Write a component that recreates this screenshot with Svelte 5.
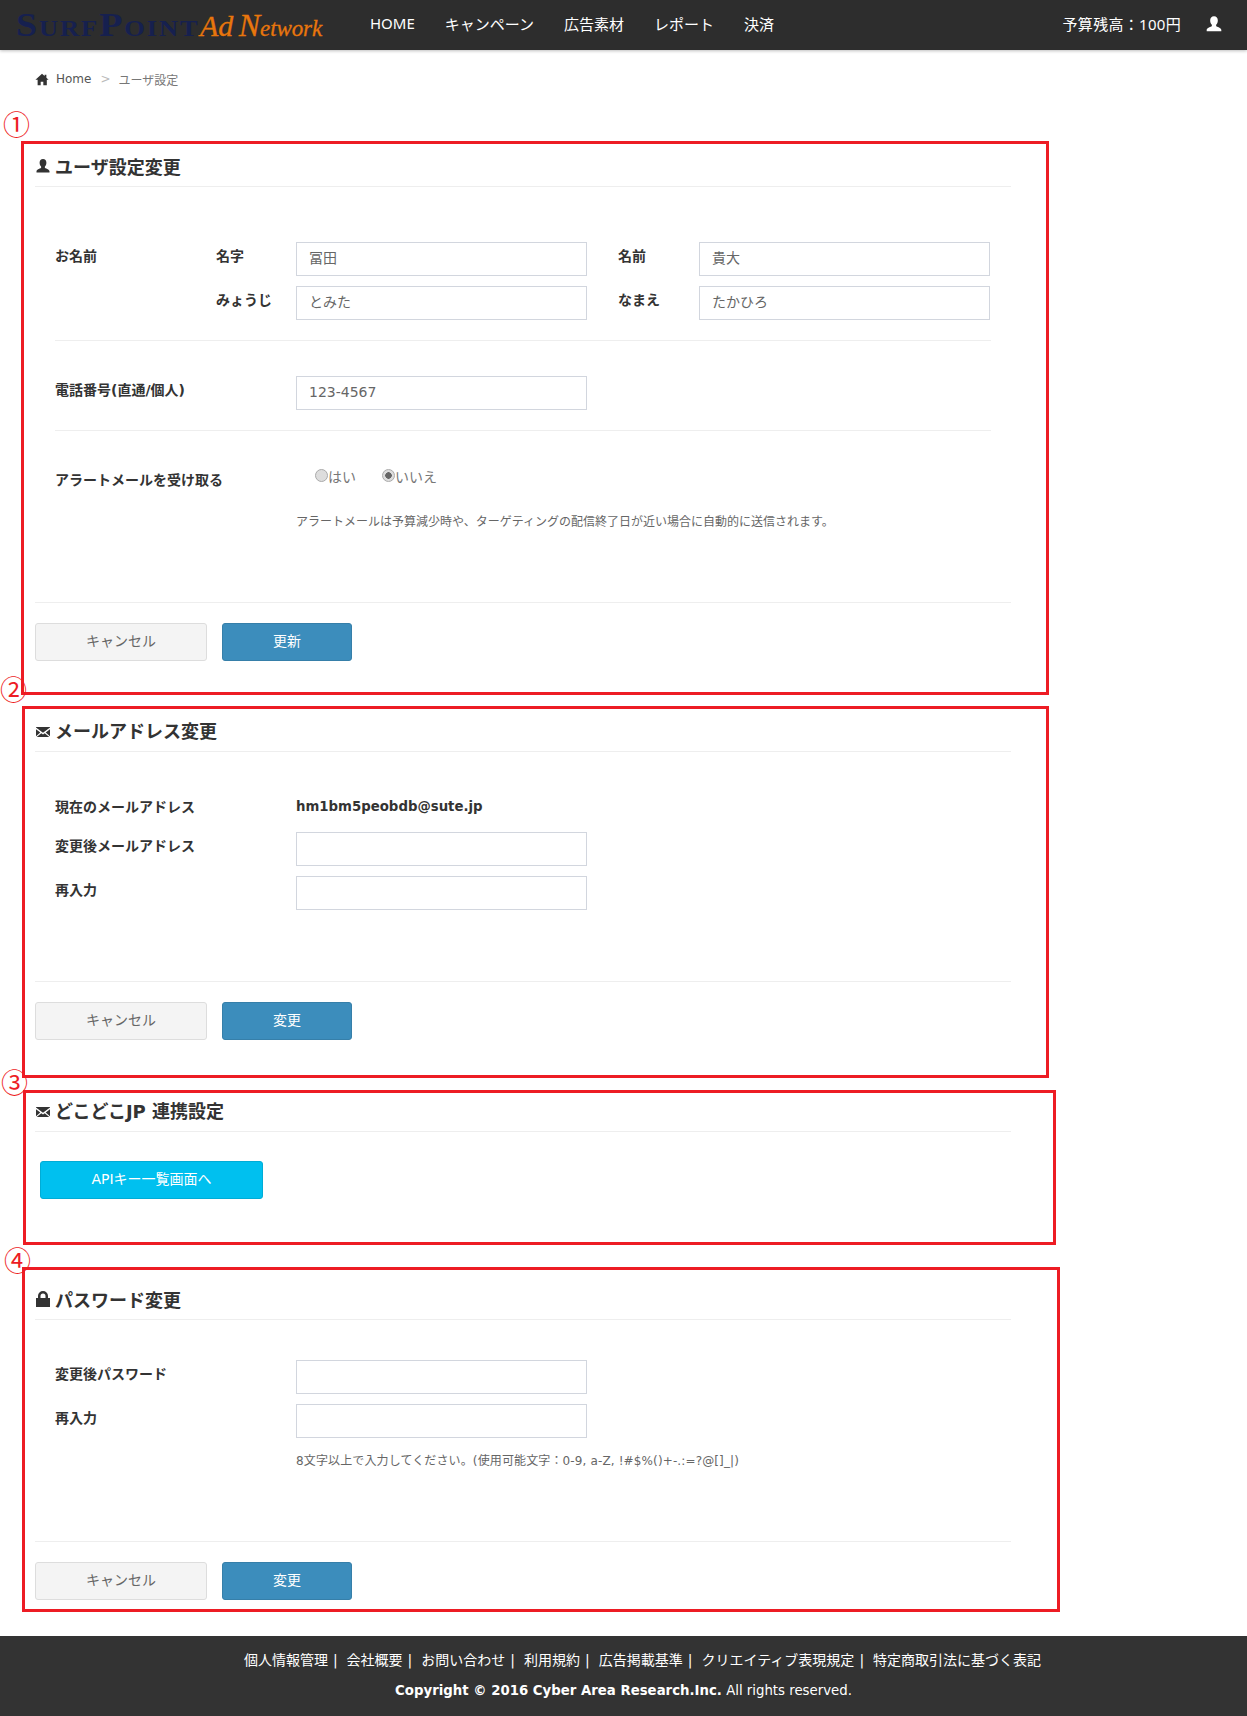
<script>
  const nav = ['HOME', 'キャンペーン', '広告素材', 'レポート', '決済'];
  const footerLinks = ['個人情報管理', '会社概要', 'お問い合わせ', '利用規約', '広告掲載基準', 'クリエイティブ表現規定', '特定商取引法に基づく表記'];
  const icons = {
    user: 'M8 1c2.2 0 3.4 1.7 3.4 3.8 0 1.5-.6 2.9-1.5 3.8v1.3c1.8.8 4.6 1.5 4.6 3.4v1.2H1.5v-1.2c0-1.9 2.8-2.6 4.6-3.4V8.6C5.200 7.700 4.600 6.300 4.600 4.800 4.600 2.700 5.800 1 8 1z',
    mail: 'M1 3h14v.6L8 8.700 1 3.600zM1 5.200v7.100l4.300-3.900zM15 5.200v7.100l-4.300-3.900zM6.300 9.200 8 10.400l1.700-1.200 4.600 3.800H1.700z',
    lock: 'M3 7V5a5 5 0 0 1 10 0v2h2v9H1V7zM5.500 7h5V5a2.500 2.500 0 0 0-5 0z',
    home: 'M8 2l3 2.700V3h2v3.500l2.500 2.300h-2V15H9.500v-4h-3v4H3V8.800H.5z'
  };
</script>

{#snippet icon(name, cls)}
  <svg class={cls} viewBox="0 0 16 16" aria-hidden="true"><path fill-rule="evenodd" d={icons[name]} /></svg>
{/snippet}

{#snippet actions(label)}
  <div class="actions">
    <button class="btn btn--default" type="button">キャンセル</button>
    <button class="btn btn--primary" type="button">{label}</button>
  </div>
{/snippet}

<header class="topbar">
  <div class="logo"><span class="logo__surf">SurfPoint</span><span class="logo__ad"><b class="logo__a">Ad</b> <b class="logo__n">N</b>etwork</span></div>
  <nav class="topnav">
    {#each nav as item}
      <a href="#top">{item}</a>
    {/each}
  </nav>
  <div class="balance">予算残高：100円</div>
  {@render icon('user', 'topbar__user')}
</header>

<div class="crumb">
  {@render icon('home', 'crumb__home')}
  <span class="crumb__link">Home</span>
  <span class="crumb__sep">&gt;</span>
  <span>ユーザ設定</span>
</div>

<main>
  <section class="box box--1">
    <span class="num">①</span>
    <h2 class="title">{@render icon('user', 'title__icon')}ユーザ設定変更</h2>
    <div class="form">
      <div class="names">
        <span class="label">お名前</span>
        <span class="label">名字</span>
        <input class="field" value="冨田" />
        <span class="label names__second">名前</span>
        <input class="field" value="貴大" />
        <span class="label names__yomi">みょうじ</span>
        <input class="field" value="とみた" />
        <span class="label names__second">なまえ</span>
        <input class="field" value="たかひろ" />
      </div>
      <div class="row row--phone">
        <span class="label">電話番号(直通/個人)</span>
        <input class="field field--latin" value="123-4567" />
      </div>
      <div class="row row--alert">
        <span class="label">アラートメールを受け取る</span>
        <div class="alert">
          <div class="radios">
            <label><input type="radio" name="alert" disabled />はい</label>
            <label><input type="radio" name="alert" disabled checked />いいえ</label>
          </div>
          <p class="note">アラートメールは予算減少時や、ターゲティングの配信終了日が近い場合に自動的に送信されます。</p>
        </div>
      </div>
    </div>
    {@render actions('更新')}
  </section>

  <section class="box box--2">
    <span class="num">②</span>
    <h2 class="title">{@render icon('mail', 'title__icon title__icon--mail')}メールアドレス変更</h2>
    <div class="form">
      <div class="stack">
        <div class="line">
          <span class="label label--mid">現在のメールアドレス</span>
          <strong class="current">hm1bm5peobdb@sute.jp</strong>
        </div>
        <div class="line">
          <span class="label">変更後メールアドレス</span>
          <input class="field" />
        </div>
        <div class="line">
          <span class="label">再入力</span>
          <input class="field" />
        </div>
      </div>
    </div>
    {@render actions('変更')}
  </section>

  <section class="box box--3">
    <span class="num">③</span>
    <h2 class="title">{@render icon('mail', 'title__icon title__icon--mail')}どこどこJP 連携設定</h2>
    <button class="btn btn--info" type="button">APIキー一覧画面へ</button>
  </section>

  <section class="box box--4">
    <span class="num">④</span>
    <h2 class="title">{@render icon('lock', 'title__icon')}パスワード変更</h2>
    <div class="form">
      <div class="stack">
        <div class="line">
          <span class="label">変更後パスワード</span>
          <input class="field" />
        </div>
        <div class="line">
          <span class="label">再入力</span>
          <input class="field" />
        </div>
        <p class="note note--pw">8文字以上で入力してください。(使用可能文字：0-9, a-Z, !#$%()+-.:=?@[]_|)</p>
      </div>
    </div>
    {@render actions('変更')}
  </section>
</main>

<footer class="footer">
  <div class="footer__links">
    {#each footerLinks as link, i}
      <a href="#top">{link}</a>{#if i < footerLinks.length - 1}<span class="footer__bar">|</span>{/if}
    {/each}
  </div>
  <div class="footer__copy"><b>Copyright © 2016 Cyber Area Research.Inc.</b> All rights reserved.</div>
</footer>

<style>
  :global(body) {
    margin: 0;
    background: #fff;
    color: #333;
    font-family: "DejaVu Sans", "Noto Sans CJK JP", sans-serif;
    font-size: 14px;
  }

  .topbar {
    display: flex;
    align-items: center;
    height: 50px;
    background: #2d2d2d;
    box-shadow: 0 1px 3px rgba(0, 0, 0, 0.25);
    color: #fff;
    position: relative;
  }

  .logo {
    display: flex;
    align-items: baseline;
    width: 370px;
    padding-left: 16px;
    box-sizing: border-box;
    font-family: "Liberation Serif", serif;
    white-space: nowrap;
  }

  .logo__surf {
    display: inline-block;
    width: 184px;
    color: #16204f;
    font-size: 33px;
    font-weight: 700;
    font-variant: small-caps;
    letter-spacing: 1.6px;
    transform: scaleX(1.155);
    transform-origin: left center;
  }

  .logo__ad {
    color: #e8760c;
    font-size: 23px;
    font-style: italic;
    letter-spacing: -0.1px;
    -webkit-text-stroke: 0.3px #e8760c;
  }

  .logo__ad b {
    font-weight: 400;
  }

  .logo__a {
    font-size: 30px;
  }

  .logo__n {
    font-size: 32px;
  }

  .topnav {
    display: flex;
    gap: 30px;
    margin-top: -4px;
  }

  .topnav a {
    color: #fff;
    font-family: "Noto Sans", "Noto Sans CJK JP", sans-serif;
    font-size: 15px;
    text-decoration: none;
  }

  .balance {
    margin: -3px 0 0 auto;
    font-family: "Noto Sans", "Noto Sans CJK JP", sans-serif;
    font-size: 15px;
    letter-spacing: 0.3px;
  }

  .topbar__user {
    width: 18px;
    height: 18px;
    margin: -2px 24px 0 24px;
    fill: #fff;
  }

  .crumb {
    display: flex;
    align-items: center;
    height: 58px;
    padding-left: 35px;
    margin-bottom: 33px;
    font-size: 12px;
    color: #777;
  }

  .crumb__home {
    width: 14px;
    height: 14px;
    margin-right: 7px;
    fill: #333;
  }

  .crumb__link {
    color: #555;
  }

  .crumb__sep {
    margin: 0 8px 0 9px;
    color: #bbb;
  }

  .box {
    position: relative;
    box-sizing: border-box;
    border: 3px solid #ed1c24;
  }

  .box--1 {
    width: 1028px;
    height: 554px;
    margin-left: 21px;
    padding-left: 11px;
  }

  .box--2 {
    width: 1027px;
    height: 372px;
    margin: 11px 0 0 22px;
    padding-left: 10px;
  }

  .box--3 {
    width: 1033px;
    height: 155px;
    margin: 12px 0 0 23px;
    padding-left: 9px;
  }

  .box--4 {
    width: 1038px;
    height: 345px;
    margin: 22px 0 0 22px;
    padding-left: 10px;
  }

  .num {
    position: absolute;
    left: -21px;
    top: -35px;
    color: #ed1c24;
    font-family: "Noto Sans CJK JP", sans-serif;
    font-size: 27px;
    line-height: 30px;
  }

  .box--2 .num {
    left: -25px;
    top: -35px;
  }

  .box--3 .num {
    left: -25px;
    top: -26px;
  }

  .box--4 .num {
    left: -21px;
    top: -25px;
  }

  .title {
    display: flex;
    align-items: center;
    box-sizing: border-box;
    width: 976px;
    height: 43px;
    margin: 0;
    padding-top: 2px;
    border-bottom: 1px solid #eee;
    font-size: 18px;
    font-weight: 700;
    color: #333;
  }

  .box--2 .title {
    padding-top: 0;
  }

  .box--3 .title {
    height: 39px;
    padding: 0 0 4px;
  }

  .box--4 .title {
    height: 50px;
    padding-top: 8px;
  }

  .title__icon {
    flex: none;
    width: 16px;
    height: 16px;
    margin-right: 4px;
    fill: #333;
  }

  .title__icon--mail {
    margin-top: 3px;
  }

  .form {
    box-sizing: border-box;
    width: 976px;
    padding: 0 20px;
    border-bottom: 1px solid #eee;
  }

  .box--1 .form {
    height: 416px;
    padding-top: 55px;
  }

  .box--2 .form {
    height: 230px;
    padding-top: 37px;
  }

  .box--4 .form {
    height: 222px;
    padding-top: 40px;
  }

  .names {
    display: grid;
    grid-template-columns: 161px 80px 291px 31px 81px 291px;
    grid-auto-rows: 34px;
    row-gap: 10px;
    padding-bottom: 20px;
    border-bottom: 1px solid #eee;
  }

  .names__second {
    grid-column: 5;
  }

  .names__yomi {
    grid-column: 2;
  }

  .label {
    padding-top: 3px;
    font-size: 14px;
    font-weight: 700;
    color: #333;
  }

  .label--mid {
    padding-top: 0;
    margin-top: -1px;
  }

  .field {
    box-sizing: border-box;
    width: 291px;
    height: 34px;
    margin: 0;
    padding: 0 12px 5px;
    border: 1px solid #d2d6de;
    border-radius: 0;
    background: #fff;
    color: #666;
    font-family: inherit;
    font-size: 14px;
  }

  .field--latin {
    padding-bottom: 3px;
  }

  .row {
    display: grid;
    grid-template-columns: 241px 1fr;
  }

  .row--phone {
    padding: 35px 0 20px;
    border-bottom: 1px solid #eee;
  }

  .row--alert {
    padding-top: 36px;
  }

  .row--alert .label {
    padding-top: 2px;
  }

  .radios {
    display: flex;
    gap: 26px;
    padding-left: 19px;
    font-size: 14px;
    color: #777;
  }

  .radios label {
    display: flex;
    align-items: center;
    height: 18px;
  }

  .radios input {
    appearance: none;
    box-sizing: border-box;
    width: 13px;
    height: 13px;
    margin: -2px 0 0;
    border: 1px solid #aaa;
    border-radius: 50%;
    background: #ddd;
  }

  .radios input:checked {
    background: radial-gradient(circle, #666 0 3px, #ddd 3.5px);
  }

  .note {
    margin: 0;
    font-size: 12px;
    color: #666;
    white-space: nowrap;
  }

  .alert .note {
    margin-top: 27px;
  }

  .note--pw {
    margin: 3px 0 0 241px;
    letter-spacing: 0.13px;
  }

  .stack {
    display: flex;
    flex-direction: column;
    gap: 10px;
  }

  .line {
    display: grid;
    grid-template-columns: 241px 291px;
    align-items: start;
    min-height: 34px;
  }

  .box--2 .line:first-child {
    align-items: center;
    margin-bottom: -1px;
  }

  .current {
    font-size: 13.3px;
    font-weight: 700;
    color: #333;
  }

  .actions {
    display: flex;
    gap: 15px;
    padding-top: 20px;
  }

  .btn {
    box-sizing: border-box;
    height: 38px;
    padding: 0 0 5px;
    border: 1px solid;
    border-radius: 3px;
    font-family: inherit;
    font-size: 14px;
  }

  .btn--default {
    width: 172px;
    background: #f4f4f4;
    border-color: #ddd;
    color: #666;
  }

  .btn--primary {
    width: 130px;
    background: #3c8dbc;
    border-color: #367fa9;
    color: #fff;
  }

  .btn--info {
    display: block;
    width: 223px;
    margin: 29px 0 0 5px;
    background: #00c0ef;
    border-color: #00acd6;
    color: #fff;
  }

  .footer {
    margin-top: 24px;
    height: 80px;
    padding: 14px 0 0 38px;
    box-sizing: border-box;
    background: #333;
    color: #fff;
    text-align: center;
    font-size: 14px;
  }

  .footer__links {
    height: 21px;
    line-height: 21px;
    font-size: 14px;
    white-space: nowrap;
  }

  .footer__links a {
    color: #fff;
    text-decoration: none;
  }

  .footer__bar {
    margin: 0 9px 0 5px;
  }

  .footer__copy {
    margin: 9px 0 0 -38px;
    line-height: 21px;
    font-size: 13.3px;
  }
</style>
